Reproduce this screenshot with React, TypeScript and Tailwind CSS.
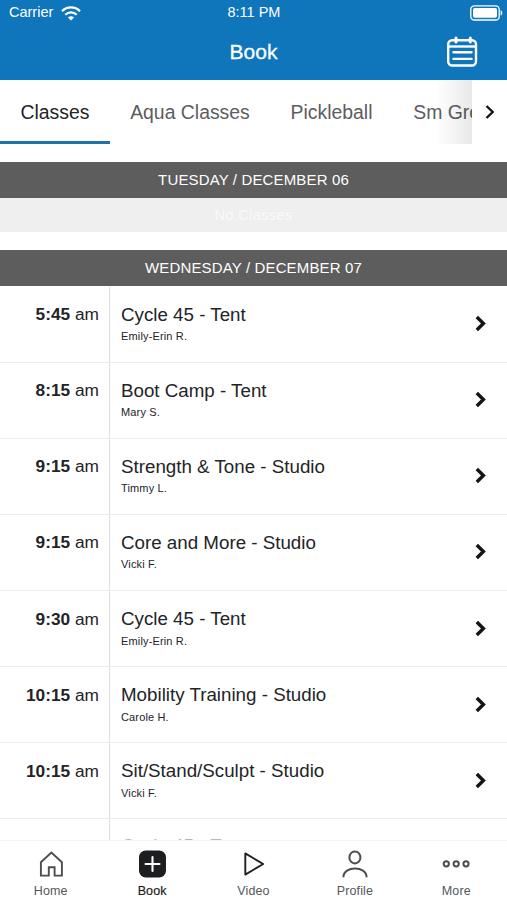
import React from 'react';

interface ClassItem {
  time: string;
  period: string;
  name: string;
  instructor: string;
}

const tabs = ['Classes', 'Aqua Classes', 'Pickleball', 'Sm Group'];

const classes: ClassItem[] = [
  { time: '5:45', period: 'am', name: 'Cycle 45 - Tent', instructor: 'Emily-Erin R.' },
  { time: '8:15', period: 'am', name: 'Boot Camp - Tent', instructor: 'Mary S.' },
  { time: '9:15', period: 'am', name: 'Strength & Tone - Studio', instructor: 'Timmy L.' },
  { time: '9:15', period: 'am', name: 'Core and More - Studio', instructor: 'Vicki F.' },
  { time: '9:30', period: 'am', name: 'Cycle 45 - Tent', instructor: 'Emily-Erin R.' },
  { time: '10:15', period: 'am', name: 'Mobility Training - Studio', instructor: 'Carole H.' },
  { time: '10:15', period: 'am', name: 'Sit/Stand/Sculpt - Studio', instructor: 'Vicki F.' }
];

const WifiIcon = () => (
  <svg width="20" height="15" viewBox="0 0 20 15" fill="none" stroke="#fff" strokeWidth="2.3">
    <path d="M1 5.2C6 .2 14 .2 19 5.2" />
    <path d="M4.3 8.8c3.2-3.2 8.2-3.2 11.4 0" />
    <path d="M10 14.6 6.9 11.5c1.7-1.6 4.5-1.6 6.2 0z" fill="#fff" stroke="none" />
  </svg>
);

const BatteryIcon = () => (
  <svg width="33" height="16" viewBox="0 0 33 16" fill="none">
    <rect x=".8" y=".8" width="28.4" height="14.2" rx="3.6" stroke="#fff" strokeWidth="1.3" />
    <rect x="3" y="3" width="24" height="9.8" rx="1.8" fill="#fff" />
    <path d="M30.7 5.2c2.1.8 2.1 4.6 0 5.4z" fill="#fff" />
  </svg>
);

const CalendarIcon = () => (
  <svg width="32" height="32" viewBox="0 0 32 32" fill="none" stroke="#fff" strokeWidth="2.4" strokeLinecap="round">
    <rect x="2.2" y="4.3" width="27.8" height="25.2" rx="4" />
    <path d="M2.2 10.5H30" strokeLinecap="butt" />
    <path d="M10 2v4M24.3 2v4" strokeWidth="3" />
    <path d="M7.5 16.3h18M7.5 22.9h18" />
  </svg>
);

const HomeIcon = () => (
  <svg width="28" height="28" viewBox="0 0 28 28" fill="none" stroke="#4b4d50" strokeWidth="1.9">
    <path d="M3.9 25.6V12.2l10.5-9.6 10.5 9.6v13.4h-7.3v-8.4h-5.8v8.4z" />
  </svg>
);

const BookIcon = () => (
  <svg width="28" height="28" viewBox="0 0 28 28">
    <rect x="1" y=".6" width="27" height="27" rx="6.8" fill="#1d1e20" />
    <path d="M14.5 7v14M7.5 14h14" stroke="#fff" strokeWidth="2.1" strokeLinecap="round" />
  </svg>
);

const VideoIcon = () => (
  <svg width="28" height="28" viewBox="0 0 28 28" fill="none" stroke="#1d1e20" strokeWidth="1.9" strokeLinejoin="round">
    <path d="M6.3 3.4v21.2L24.2 14z" />
  </svg>
);

const ProfileIcon = () => (
  <svg width="28" height="28" viewBox="0 0 28 28" fill="none" stroke="#4b4d50" strokeWidth="2">
    <ellipse cx="13.9" cy="7.4" rx="5.5" ry="6" />
    <path d="M2.4 27.2c0-11.6 23.2-11.6 23.2 0" />
  </svg>
);

const MoreIcon = () => (
  <svg width="28" height="28" viewBox="0 0 28 28" fill="none" stroke="#4b4d50" strokeWidth="2">
    <circle cx="4.3" cy="13.8" r="2.6" />
    <circle cx="14.2" cy="13.8" r="2.6" />
    <circle cx="24" cy="13.8" r="2.6" />
  </svg>
);

const navItems = [
  { label: 'Home', icon: <HomeIcon />, active: false },
  { label: 'Book', icon: <BookIcon />, active: true },
  { label: 'Video', icon: <VideoIcon />, active: false },
  { label: 'Profile', icon: <ProfileIcon />, active: false },
  { label: 'More', icon: <MoreIcon />, active: false }
];

const DayHeader = ({ children }: { children: React.ReactNode }) => (
  <h2 className="h-9 shrink-0 bg-[#5d5d5d] text-center text-[15px] leading-[36px] tracking-[0.14px] text-white">
    {children}
  </h2>
);

const ClassRow = ({ item }: { item: ClassItem }) => (
  <div className="flex h-[76.15px] shrink-0 border-b border-[#ebecee]">
    <div className="w-[110px] shrink-0 border-r border-[#dcdee1] pt-[17.5px] pr-[10px] text-right text-[17.3px] leading-5">
      <span className="font-bold">{item.time}</span> {item.period}
    </div>
    <div className="flex-1 pt-[17px] pl-[11px]">
      <div className="text-[18.75px] leading-[22px]">{item.name}</div>
      <div className="mt-[3.5px] text-[11px] leading-[14px] tracking-[0.15px]">{item.instructor}</div>
    </div>
    <svg className="mt-[28.5px] mr-[19px]" width="14" height="17" viewBox="0 0 14 17" fill="none" stroke="#141414" strokeWidth="3.4">
      <path d="m2.8 2 6.6 6.5-6.6 6.5" />
    </svg>
  </div>
);

export default function App() {
  return (
    <div className="flex h-[900px] w-[507px] flex-col overflow-hidden bg-white font-['Liberation_Sans',Arial,sans-serif] text-[#232427]">
      {/* Status bar and title */}
      <header className="h-20 shrink-0 bg-[#0f76bc] text-white">
        <div className="grid h-[26px] grid-cols-3 items-center pr-[4px] pl-[9px] text-[14.5px]">
          <div className="flex items-center gap-2">
            <span>Carrier</span>
            <WifiIcon />
          </div>
          <span className="-ml-1 text-center">8:11 PM</span>
          <div className="flex justify-end">
            <BatteryIcon />
          </div>
        </div>
        <div className="grid h-[52px] grid-cols-3 items-center">
          <h1 className="col-start-2 text-center text-[21px] [-webkit-text-stroke:0.3px_white]">Book</h1>
          <div className="flex justify-end pr-[29px]">
            <CalendarIcon />
          </div>
        </div>
      </header>

      {/* Category tabs */}
      <div className="flex h-16 shrink-0">
        <div className="relative flex flex-1 overflow-hidden">
          {tabs.map((tab, i) => (
            <button
              key={tab}
              className={`shrink-0 border-b-[3px] px-[20.4px] pt-1 text-[19.4px] whitespace-nowrap ${
                i === 0 ? 'border-[#1b75a8] text-[#232427]' : 'border-transparent text-[#5c5d60]'
              }`}
            >
              {tab}
            </button>
          ))}
          <div className="absolute inset-y-0 right-0 w-9 bg-linear-to-r from-transparent to-black/9" />
        </div>
        <button className="flex w-[35px] shrink-0 items-center justify-center">
          <svg width="14" height="16" viewBox="0 0 14 16" fill="none" stroke="#141414" strokeWidth="2.4">
            <path d="m3.5 2 6.2 6-6.2 6" />
          </svg>
        </button>
      </div>

      {/* Schedule */}
      <main className="mt-[18px] flex min-h-0 flex-1 flex-col overflow-hidden">
        <DayHeader>TUESDAY / DECEMBER 06</DayHeader>
        <div className="mb-[18px] h-[34px] shrink-0 bg-[#efefef] text-center text-[14.5px] leading-[34px] tracking-[0.4px] text-[#fafafa]">
          No Classes
        </div>
        <DayHeader>WEDNESDAY / DECEMBER 07</DayHeader>
        <div className="flex min-h-0 flex-1 flex-col pt-[0.5px]">
          {classes.map((item, i) => (
            <ClassRow key={i} item={item} />
          ))}
          {/* Next class, mostly scrolled under the nav */}
          <div className="flex flex-1">
            <div className="w-[110px] shrink-0 border-r border-[#dcdee1]" />
            <div className="pt-[15.4px] pl-[11px] text-[18.75px] leading-[22px] text-[#b5b6b8]">
              Cycle 45 - Tent
            </div>
          </div>
        </div>
      </main>

      {/* Bottom navigation */}
      <nav className="grid h-[60px] shrink-0 grid-cols-5 border-t border-[#f3f3f3] bg-white">
        {navItems.map(({ label, icon, active }) => (
          <button key={label} className="flex flex-col items-center pt-[9px]">
            {icon}
            <span
              className={`mt-[6px] text-[12.5px] leading-[15px] tracking-[0.1px] ${
                active ? 'text-[#1d1e20] [-webkit-text-stroke:0.2px_#1d1e20]' : 'text-[#55575a]'
              }`}
            >
              {label}
            </span>
          </button>
        ))}
      </nav>
    </div>
  );
}
